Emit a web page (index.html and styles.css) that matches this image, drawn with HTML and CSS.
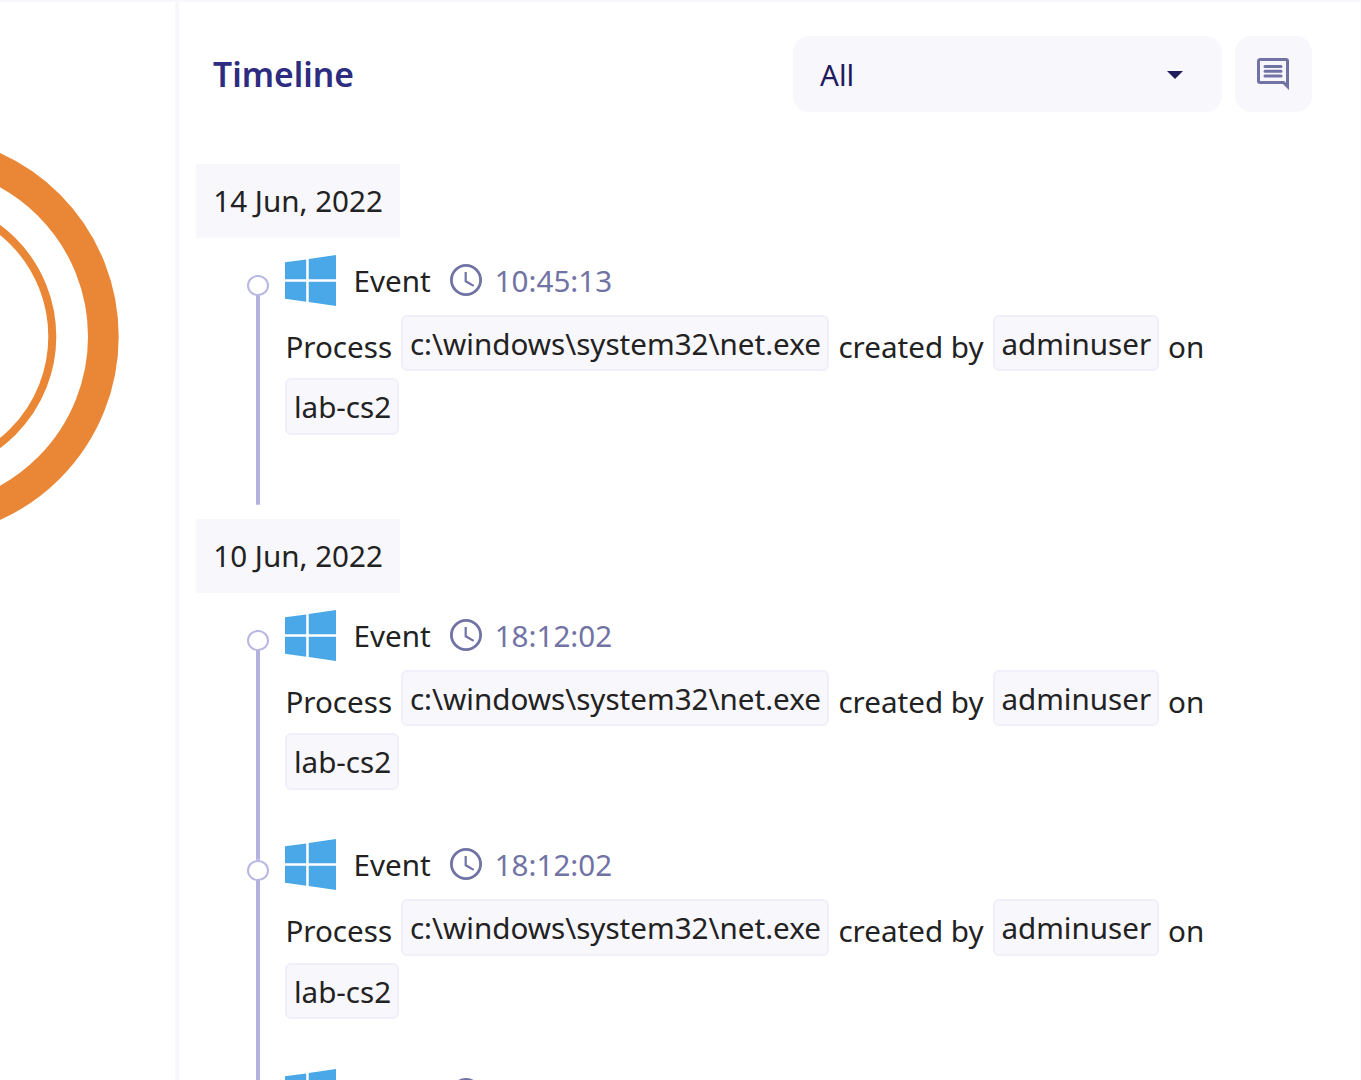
FILE: index.html
```html
<!DOCTYPE html>
<html lang="en">
<head>
<meta charset="utf-8">
<title>Timeline</title>
<link rel="stylesheet" href="styles.css">
</head>
<body>
<svg class="defs" width="0" height="0" aria-hidden="true">
  <symbol id="windows" viewBox="0 0 51 51">
    <path d="M0 7.3 21.2 4.400V24.200H0zM23.700 4 51 0v24.200H23.700zM0 26.800h21.200v19.900L0 43.800zM23.700 26.800H51V51l-27.300-4z" fill="#4ba8e8"/>
  </symbol>
  <symbol id="clock" viewBox="0 0 32 32">
    <circle cx="16" cy="16" r="14.600" fill="none" stroke="#7273a5" stroke-width="2.800"/>
    <path d="M15.700 8v9.300l8 4.600" fill="none" stroke="#7273a5" stroke-width="2.200"/>
  </symbol>
</svg>
<div class="app">
  <section class="graph">
    <svg class="rings" width="176" height="1078" viewBox="0 2 176 1078">
      <circle cx="-82.500" cy="336.500" r="185.850" fill="none" stroke="#e98736" stroke-width="30.700"/>
      <circle cx="-82.500" cy="336.500" r="134.800" fill="none" stroke="#e98736" stroke-width="8"/>
    </svg>
  </section>
  <main class="panel">
    <header class="toolbar">
      <h1 class="title">Timeline</h1>
      <div class="select"><span>All</span><svg width="16" height="8" viewBox="0 0 16 8"><path d="M0 0h16L8 8z" fill="#1f1c5c"/></svg></div>
      <button class="comment" aria-label="Comments">
        <svg width="32" height="32" viewBox="0 0 32 32"><path d="M3 1.500h26a1.500 1.500 0 0 1 1.500 1.500v25.500L26.500 24.500H3A1.500 1.500 0 0 1 1.500 23V3A1.500 1.500 0 0 1 3 1.500z" fill="none" stroke="#7273a5" stroke-width="3"/><path d="M8 8.500h16M8 13.200h16M8 18h16" stroke="#7273a5" stroke-width="3" stroke-linecap="round"/></svg>
      </button>
    </header>

    <section class="group">
      <h2 class="date">14 Jun, 2022</h2>
      <article class="entry">
        <div class="rail"><i class="dot"></i></div>
        <div class="content">
          <div class="head"><svg class="logo"><use href="#windows"/></svg><span class="kind">Event</span><svg class="clock"><use href="#clock"/></svg><time class="time">10:45:13</time></div>
          <div class="message"><span class="word process">Process</span><span class="chip path">c:\windows\system32\net.exe</span><span class="word created">created by</span><span class="chip user">adminuser</span><span class="word">on</span><span class="chip host">lab-cs2</span></div>
        </div>
      </article>
    </section>

    <section class="group">
      <h2 class="date">10 Jun, 2022</h2>
      <article class="entry">
        <div class="rail"><i class="dot"></i></div>
        <div class="content">
          <div class="head"><svg class="logo"><use href="#windows"/></svg><span class="kind">Event</span><svg class="clock"><use href="#clock"/></svg><time class="time">18:12:02</time></div>
          <div class="message"><span class="word process">Process</span><span class="chip path">c:\windows\system32\net.exe</span><span class="word created">created by</span><span class="chip user">adminuser</span><span class="word">on</span><span class="chip host">lab-cs2</span></div>
        </div>
      </article>
      <article class="entry">
        <div class="rail"><i class="dot"></i></div>
        <div class="content">
          <div class="head"><svg class="logo"><use href="#windows"/></svg><span class="kind">Event</span><svg class="clock"><use href="#clock"/></svg><time class="time">18:12:02</time></div>
          <div class="message"><span class="word process">Process</span><span class="chip path">c:\windows\system32\net.exe</span><span class="word created">created by</span><span class="chip user">adminuser</span><span class="word">on</span><span class="chip host">lab-cs2</span></div>
        </div>
      </article>
      <article class="entry">
        <div class="rail"><i class="dot"></i></div>
        <div class="content">
          <div class="head"><svg class="logo"><use href="#windows"/></svg><svg class="clock lone"><use href="#clock"/></svg></div>
        </div>
      </article>
    </section>
  </main>
</div>
</body>
</html>
```
FILE: styles.css
```css
* { box-sizing: border-box; }
body {
  margin: 0;
  height: 1080px;
  overflow: hidden;
  background: #fff;
  color: #222;
  font: 29.6px/40px "Noto Sans", "Open Sans", sans-serif;
}
.defs { display: block; }
.app {
  display: flex;
  height: 1080px;
  border-top: 2px solid #f8f7fc;
  border-right: 1px solid #fbfafd;
  overflow: hidden;
}
.graph { flex: none; width: 175px; overflow: hidden; }
.rings { display: block; }
.panel {
  flex: 1;
  border-left: 4px solid #f8f7fc;
  padding: 34px 48.5px 0 17px;
}
.toolbar { display: flex; height: 76px; align-items: center; margin-bottom: 51.7px; }
.title {
  margin: 0 auto 0 17px;
  font-size: 33.7px;
  font-weight: 600;
  color: #2e2c80;
}
.select {
  display: flex;
  width: 429px;
  height: 76px;
  align-items: center;
  justify-content: space-between;
  padding: 1px 39px 0 27px;
  border-radius: 16px;
  background: #f8f7fc;
  color: #1f1c5c;
}
.comment {
  display: flex;
  width: 76.5px;
  height: 76px;
  margin-left: 13px;
  padding: 0 0 1px;
  align-items: center;
  justify-content: center;
  border: 0;
  border-radius: 16px;
  background: #f8f7fc;
}
.group { margin-bottom: 34.5px; }
.date {
  width: 204px;
  height: 74px;
  margin: 0 0 17px;
  padding-left: 17.3px;
  background: #f8f7fc;
  font-size: 29.6px;
  line-height: 73px;
  font-weight: 400;
}
.entry { display: flex; height: 229.5px; padding-left: 51px; }
.rail {
  flex: none;
  display: flex;
  width: 22px;
  margin: 20.8px 16.4px -20.8px 0;
  justify-content: center;
  background: linear-gradient(#b3b2df, #b3b2df) center / 4px 100% no-repeat;
}
.dot {
  width: 22px;
  height: 21px;
  border: 2px solid #b9b7e3;
  border-radius: 50%;
  background: #fff;
}
.content { flex: 1; }
.head { display: flex; height: 51px; align-items: center; margin-bottom: 9.3px; }
.logo { width: 51px; height: 51px; margin-right: 17.2px; }
.kind { width: 96.6px; padding-top: 1px; }
.clock { width: 32px; height: 32px; margin: -1px 12.5px 0 0; }
.lone { margin-left: 96.6px; }
.time { padding-top: 1px; color: #7273a5; }
.message { display: flex; flex-wrap: wrap; row-gap: 7px; width: 930px; }
.word { padding-top: 12px; line-height: 40px; white-space: nowrap; }
.process { width: 116px; }
.created { width: 163.5px; padding-left: 9px; }
.user + .word { padding-left: 8.6px; }
.chip {
  height: 56.5px;
  padding: 7px 0 0 6.5px;
  border: 2px solid #f1effa;
  border-radius: 6px;
  background: #f8f7fc;
  white-space: nowrap;
}
.path { width: 428px; }
.user { width: 166.500px; }
.host { width: 113.5px; }
```
